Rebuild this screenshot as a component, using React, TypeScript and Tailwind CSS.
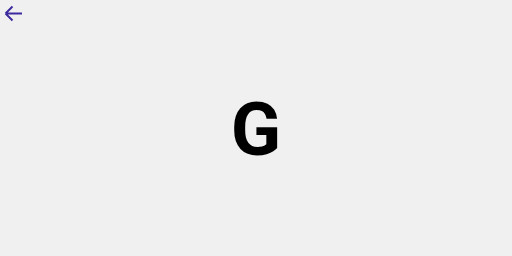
import * as React from "react";

export default function App() {
  return (
    <div className="relative flex h-[256px] w-[512px] items-center justify-center bg-[#f0f0f0]">
      <button className="absolute left-[2px] top-[2px] p-0 text-[#3b2b9e]">
        <svg width="22" height="22" viewBox="0 0 22 22" fill="none" stroke="currentColor" strokeWidth="1.9">
          <path d="M3.5 11.5H20M3.5 11.5L10.5 4.5M3.5 11.5L10.5 18.5" />
        </svg>
      </button>
      <span className="mt-[3px] font-['Roboto',sans-serif] text-[74px] font-bold leading-none text-black">G</span>
    </div>
  );
}
